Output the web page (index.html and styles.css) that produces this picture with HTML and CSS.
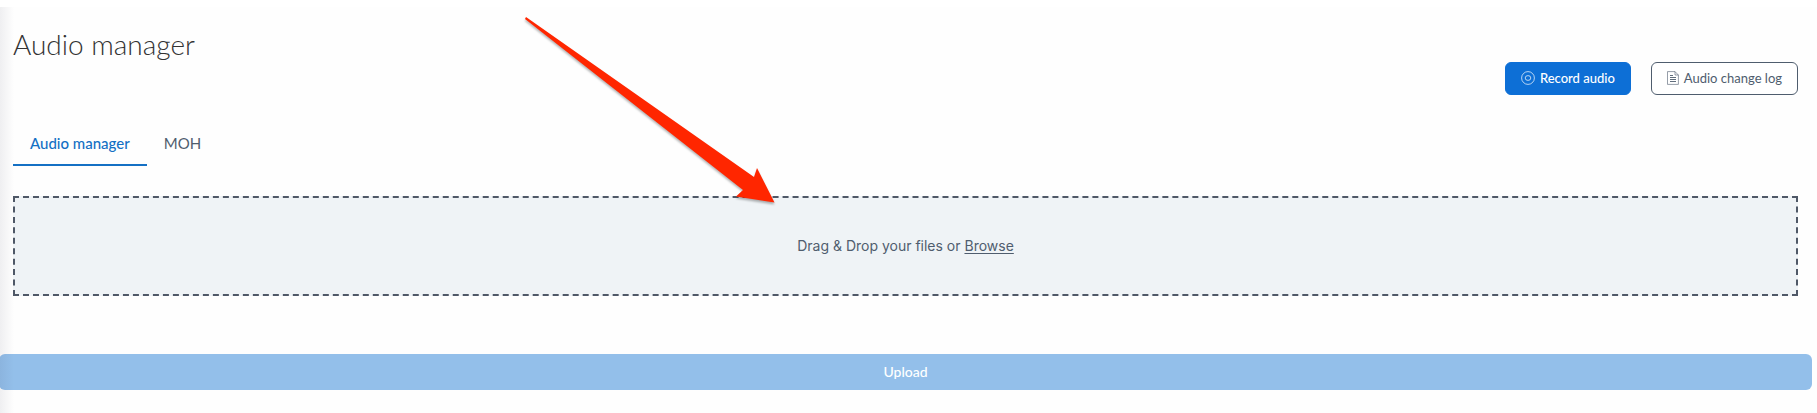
FILE: index.html
```html
<!DOCTYPE html>
<html lang="en">
<head>
  <meta charset="UTF-8">
  <meta name="viewport" content="width=device-width, initial-scale=1.0">
  <title>Audio manager</title>
  <link rel="stylesheet" href="styles.css">
</head>
<body>

  <main class="page">
    <header class="header">
      <h1 class="title">Audio manager</h1>
      <div class="actions">
        <button type="button" class="btn btn-primary">
          <svg class="icon" width="14" height="14" viewBox="0 0 14 14" fill="none" stroke="currentColor" stroke-width="0.7" aria-hidden="true">
            <circle cx="7" cy="7" r="6.4"/>
            <ellipse cx="7" cy="7" rx="2.8" ry="2.4"/>
          </svg>
          Record audio
        </button>
        <button type="button" class="btn btn-outline">
          <svg class="icon" width="12" height="14" viewBox="0 0 12 14" fill="none" stroke="currentColor" stroke-width="0.6" aria-hidden="true">
            <path d="M0.5 0.6H8L11.4 4V13.4H0.500Z"/>
            <path d="M8 0.6V4H11.4"/>
            <path d="M3 4.5H6M3 6.5H9M3 8.5H9M3 10.5H9" stroke-width="0.9"/>
          </svg>
          Audio change log
        </button>
      </div>
    </header>

    <nav class="tabs">
      <a href="#audio" class="tab active">Audio manager</a>
      <a href="#moh" class="tab">MOH</a>
    </nav>

    <section class="dropzone">
      <p class="dropzone-text">Drag &amp; Drop your files or <a href="#browse" class="browse">Browse</a></p>
    </section>

    <button type="button" class="upload" disabled>Upload</button>
  </main>

  <!-- Pointer to the drop area -->
  <svg class="arrow" width="270" height="200" viewBox="0 0 270 200" aria-hidden="true">
    <path d="M6 17 L234 177 L237 168 L254.500 202.500 L216 196.500 L223 190 L5 19 Z" fill="#ff2600"/>
  </svg>

</body>
</html>
```

FILE: styles.css
```css
* {
  box-sizing: border-box;
}

body {
  margin: 0;
  padding-top: 7px;
  background-color: #fff;
  color: #4f5d6e;
  font-family: Lato, "Liberation Sans", sans-serif;
  font-size: 14px;
}

.page {
  position: relative;
  padding: 16px 19px 23px 13px;
  background-color: #fefefe;
}

.page::after {
  content: "";
  position: absolute;
  top: 0;
  bottom: 0;
  left: 0;
  width: 14px;
  background: linear-gradient(to right, rgba(40, 40, 70, 0.07), rgba(40, 40, 70, 0));
  pointer-events: none;
}

.header {
  display: flex;
  justify-content: space-between;
  align-items: flex-end;
  height: 72px;
}

.title {
  margin: 0;
  align-self: flex-start;
  color: #333;
  font-size: 28px;
  font-weight: 300;
  line-height: 42px;
}

.actions {
  display: flex;
  gap: 20px;
}

.btn {
  display: flex;
  align-items: center;
  gap: 5px;
  height: 33px;
  padding: 0 15px 1px;
  border: 1px solid #4f5d6e;
  border-radius: 6px;
  font-family: inherit;
  font-size: 13px;
  cursor: pointer;
}

.btn-primary {
  background-color: #0d6fd6;
  border-color: #0d6fd6;
  color: #fff;
  font-weight: 500;
}

.btn-outline {
  background-color: #fff;
  color: #4f5d6e;
}

.tabs {
  display: flex;
  margin-top: 26px;
}

.tab {
  padding: 10px 17px 9px;
  border-bottom: 2px solid transparent;
  color: #4f5d6e;
  font-size: 15px;
  line-height: 24px;
  text-decoration: none;
}

.tab.active {
  border-bottom-color: #1470c4;
  color: #1470c4;
  font-weight: 500;
}

.dropzone {
  display: flex;
  justify-content: center;
  align-items: center;
  height: 100px;
  margin-top: 30px;
  border: 2px dashed #4f5867;
  background-color: #eff3f6;
}

.dropzone-text {
  margin: 0;
  font-family: Inter, "Liberation Sans", sans-serif;
  font-size: 14px;
  line-height: 20px;
}

.browse {
  color: inherit;
  text-decoration-thickness: 1px;
  text-underline-offset: 2px;
}

.upload {
  display: block;
  width: calc(100% + 28px);
  height: 36px;
  margin: 58px 0 0 -14px;
  padding: 0 0 2px;
  border: none;
  border-radius: 6px;
  background-color: #93bfea;
  color: #fff;
  font-family: inherit;
  font-size: 14px;
  font-weight: 500;
}

.arrow {
  position: absolute;
  top: 0;
  left: 520px;
  overflow: visible;
  filter: drop-shadow(0 2px 1px rgba(0, 0, 0, 0.3));
  pointer-events: none;
}
```
